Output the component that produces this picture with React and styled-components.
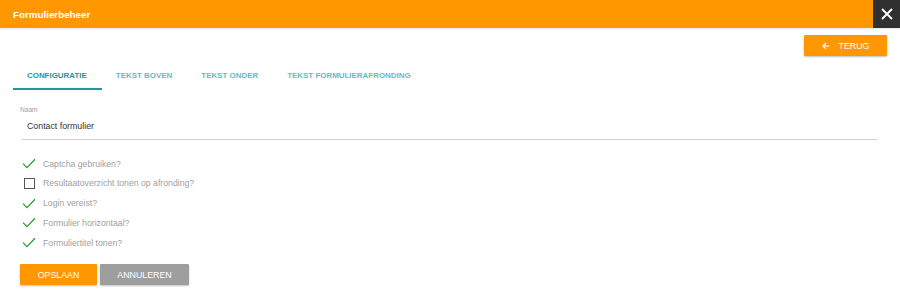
import React from 'react'
import styled, { createGlobalStyle } from 'styled-components'

const GlobalStyle = createGlobalStyle`
  body {
    margin: 0;
    background: #fff;
    font-family: 'Liberation Sans', Arial, sans-serif;
  }
`

const Page = styled.div`
  width: 900px;
  height: 292px;
  overflow: hidden;
`

const Header = styled.header`
  display: flex;
  align-items: center;
  height: 28px;
  background: #ff9800;
  box-shadow: 0 1px 2px rgba(0, 0, 0, 0.12);
`

const Title = styled.h1`
  flex: 1;
  margin: 0;
  padding-left: 13px;
  color: #fff;
  font-size: 9.8px;
  font-weight: 700;
`

const CloseButton = styled.button`
  width: 27px;
  height: 28px;
  border: 0;
  padding: 0;
  background: #303030;
  display: flex;
  align-items: center;
  justify-content: center;
`

const TopBar = styled.div`
  display: flex;
  justify-content: flex-end;
  padding: 7px 13px 0 0;
`

const Button = styled.button`
  display: inline-flex;
  align-items: center;
  justify-content: center;
  gap: 9px;
  height: 21px;
  width: ${p => p.$w}px;
  border: 0;
  border-radius: 1px;
  background: ${p => (p.$grey ? '#9e9e9e' : '#ff9800')};
  color: #fff;
  font-family: inherit;
  font-size: 8.8px;
  text-transform: uppercase;
  box-shadow: 0 1px 2px rgba(0, 0, 0, 0.25);
`

const Tabs = styled.nav`
  display: flex;
  margin: 7px 0 0 13px;
`

const Tab = styled.div`
  padding: 8px 15px 8px 14px;
  font-size: 7.9px;
  font-weight: 700;
  letter-spacing: 0.03px;
  text-transform: uppercase;
  color: ${p => (p.$active ? '#23959f' : '#5fbcc6')};
  border-bottom: 2px solid ${p => (p.$active ? '#23959f' : 'transparent')};
`

const Form = styled.form`
  padding: 16px 23px 0 20px;
`

const Label = styled.div`
  font-size: 6.6px;
  color: #9e9e9e;
`

const Input = styled.div`
  margin: 8px 0 0 2px;
  padding: 0 0 8px 5px;
  font-size: 8.8px;
  color: #333;
  border-bottom: 1px solid #cfcfcf;
`

const Checks = styled.div`
  display: flex;
  flex-direction: column;
  gap: 4.75px;
  margin-top: 16px;
`

const CheckRow = styled.label`
  display: flex;
  align-items: center;
  height: 15px;
  padding-left: 2px;
  font-size: 8.7px;
  color: #a0a0a0;
`

const IconSlot = styled.span`
  width: 21px;
  display: flex;
  align-items: center;
`

const Box = styled.span`
  display: block;
  width: 9px;
  height: 9px;
  margin-left: 2px;
  border: 1.3px solid #555;
`

const Actions = styled.div`
  display: flex;
  gap: 3px;
  margin-top: 14px;
`

const Check = () => (
  <svg width="14" height="11" viewBox="0 0 14 11">
    <path d="M1 5.6 L5 9.6 L13 1.2" fill="none" stroke="#2e9a2e" strokeWidth="1.3" />
  </svg>
)

const options = [
  ['Captcha gebruiken?', true],
  ['Resultaatoverzicht tonen op afronding?', false],
  ['Login vereist?', true],
  ['Formulier horizontaal?', true],
  ['Formuliertitel tonen?', true],
]

export default function App() {
  return (
    <Page>
      <GlobalStyle />
      <Header>
        <Title>Formulierbeheer</Title>
        <CloseButton aria-label="Sluiten">
          <svg width="12" height="12" viewBox="0 0 12 12">
            <path d="M1 1 L11 11 M11 1 L1 11" stroke="#fff" strokeWidth="1.8" />
          </svg>
        </CloseButton>
      </Header>
      <TopBar>
        <Button $w={83}>
          <svg width="8" height="8" viewBox="0 0 10 10">
            <path d="M9 5 H1.5 M5 1.3 L1.3 5 L5 8.7" fill="none" stroke="#fff" strokeWidth="1.5" />
          </svg>
          Terug
        </Button>
      </TopBar>
      <Tabs>
        <Tab $active>Configuratie</Tab>
        <Tab>Tekst boven</Tab>
        <Tab>Tekst onder</Tab>
        <Tab>Tekst formulierafronding</Tab>
      </Tabs>
      <Form>
        <Label>Naam</Label>
        <Input>Contact formulier</Input>
        <Checks>
          {options.map(([text, on]) => (
            <CheckRow key={text}>
              <IconSlot>{on ? <Check /> : <Box />}</IconSlot>
              {text}
            </CheckRow>
          ))}
        </Checks>
        <Actions>
          <Button $w={77}>Opslaan</Button>
          <Button $w={89} $grey>Annuleren</Button>
        </Actions>
      </Form>
    </Page>
  )
}
